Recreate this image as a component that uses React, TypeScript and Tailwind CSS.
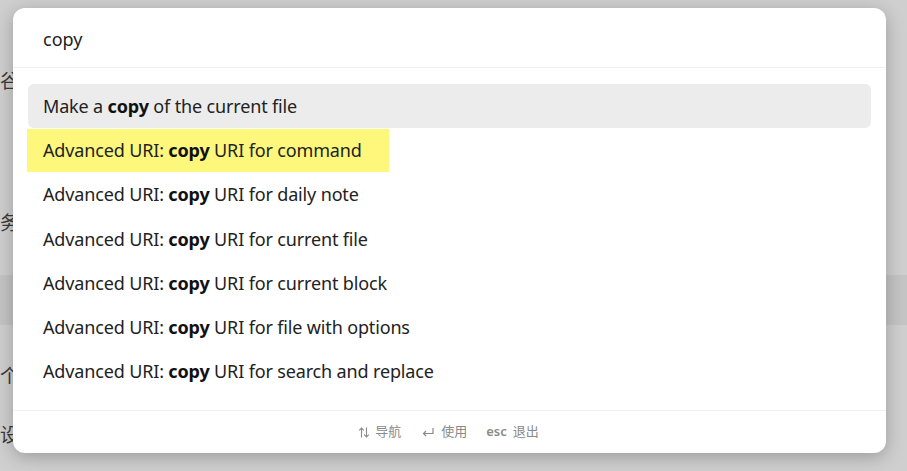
import React from "react";

const items = [
  { pre: "Make a ", bold: "copy", post: " of the current file" },
  { pre: "Advanced URI: ", bold: "copy", post: " URI for command" },
  { pre: "Advanced URI: ", bold: "copy", post: " URI for daily note" },
  { pre: "Advanced URI: ", bold: "copy", post: " URI for current file" },
  { pre: "Advanced URI: ", bold: "copy", post: " URI for current block" },
  { pre: "Advanced URI: ", bold: "copy", post: " URI for file with options" },
  { pre: "Advanced URI: ", bold: "copy", post: " URI for search and replace" },
];

function UpDown() {
  return (
    <svg width="12" height="11" viewBox="0 0 12 11" fill="none" stroke="#8a8a8a" strokeWidth="1.1">
      <path d="M3.5 10.5V1M1.2 3.3L3.5 1l2.3 2.3" />
      <path d="M8.5 0.5V10M6.2 7.7L8.5 10l2.3-2.3" />
    </svg>
  );
}

function Enter() {
  return (
    <svg width="12" height="10" viewBox="0 0 12 10" fill="none" stroke="#8a8a8a" strokeWidth="1.2">
      <path d="M11 1v5.5H1.5M4 4L1.5 6.5 4 9" />
    </svg>
  );
}

export default function App() {
  return (
    <div
      className="relative w-[907px] h-[471px] overflow-hidden bg-[#cfcfcf]"
      style={{ fontFamily: '"Noto Sans", "Noto Sans CJK SC", sans-serif' }}
    >
      {/* background content */}
      <div
        className="absolute inset-0 flex flex-col text-[#3a3a3a] text-[19px]"
        style={{ fontFamily: '"Noto Sans CJK SC", sans-serif' }}
      >
        <div className="h-[60px]" />
        <div className="h-[40px] leading-[40px]">谷</div>
        <div className="h-[102px]" />
        <div className="h-[40px] leading-[40px]">务</div>
        <div className="h-[33px]" />
        <div className="h-[50px] bg-[#c4c4c4] w-full" />
        <div className="h-[30px]" />
        <div className="h-[40px] leading-[40px]">个</div>
        <div className="h-[24px]" />
        <div className="h-[30px] leading-[30px]">设</div>
      </div>

      {/* modal */}
      <div className="absolute left-[13px] top-[8px] w-[873px] h-[445px] rounded-[12px] bg-white shadow-[0_4px_18px_rgba(0,0,0,0.25)] flex flex-col overflow-hidden">
        <div className="h-[60px] shrink-0 flex items-center pt-[4px] px-[30px] border-b border-[#efefef] text-[18px] text-[#222]">
          copy
        </div>
        <div className="flex-1 flex flex-col px-[15px] pt-[16px] tracking-[-0.15px]">
          {items.map((it, i) => (
            <div
              key={i}
              className={
                "h-[44.3px] shrink-0 flex items-center rounded-[6px] text-[18px] text-[#222] " +
                (i === 0 ? "bg-[#ececec]" : "")
              }
            >
              {i === 1 ? (
                <span className="-ml-[1px] h-[43px] flex items-center pl-[16px] pr-[27px] bg-[#fdf87c]">
                  <span className="whitespace-pre">
                    {it.pre}
                    <b className="font-bold text-[#111]">{it.bold}</b>
                    {it.post}
                  </span>
                </span>
              ) : (
                <span className="pl-[15px] whitespace-pre">
                  {it.pre}
                  <b className="font-bold text-[#111]">{it.bold}</b>
                  {it.post}
                </span>
              )}
            </div>
          ))}
        </div>
        <div className="h-[43px] shrink-0 border-t border-[#f1f1f1] flex items-center justify-center text-[13px] text-[#8a8a8a] pr-[2px]">
          <span className="flex items-center gap-[5px]">
            <UpDown />
            <span>导航</span>
          </span>
          <span className="flex items-center gap-[7px] ml-[21px]">
            <Enter />
            <span>使用</span>
          </span>
          <span className="flex items-center gap-[6px] ml-[19px]">
            <span className="font-semibold">esc</span>
            <span>退出</span>
          </span>
        </div>
      </div>
    </div>
  );
}
